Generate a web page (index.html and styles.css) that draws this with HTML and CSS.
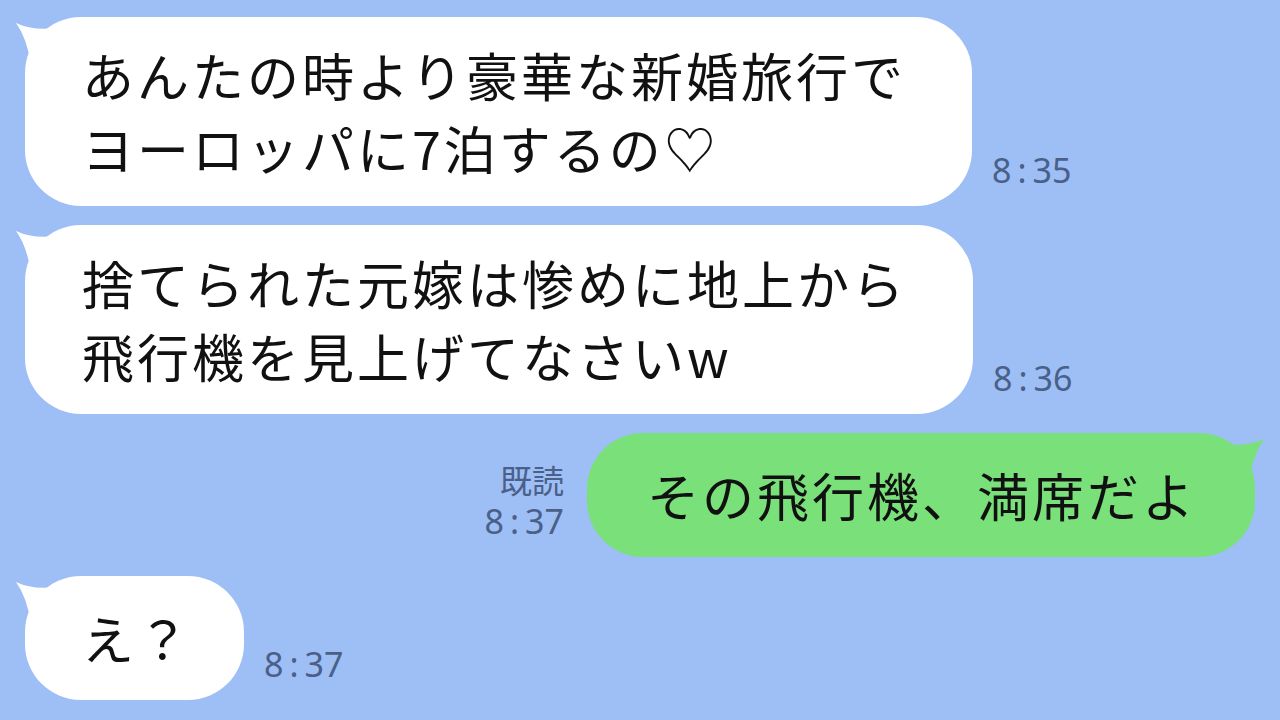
FILE: index.html
```html
<!DOCTYPE html>
<html>
    <head>
        <title>トーク</title>
        <meta charset="utf-8">
        <link rel="stylesheet" href="styles.css">
    </head>
    <body>
        <div class="chat">
            <div class="row">
                <div class="bubble bubble-white">
                    <svg class="tail tail-left" viewBox="0 0 50 50"><path d="M3 6 Q20 14 42 11 L42 48 L18 48 Q14 21 3 6 Z"/></svg>
                    <p>あんたの時より豪華な新婚旅行で<br>ヨーロッパに7泊するの♡</p>
                </div>
                <div class="meta meta-left"><span class="time">8<span class="colon">:</span>35</span></div>
            </div>
            <div class="row">
                <div class="bubble bubble-white">
                    <svg class="tail tail-left" viewBox="0 0 50 50"><path d="M3 6 Q20 14 42 11 L42 48 L18 48 Q14 21 3 6 Z"/></svg>
                    <p>捨てられた元嫁は惨めに地上から<br>飛行機を見上げてなさいw</p>
                </div>
                <div class="meta meta-left"><span class="time">8<span class="colon">:</span>36</span></div>
            </div>
            <div class="row row-right">
                <div class="meta meta-right">
                    <span class="read">既読</span>
                    <span class="time">8<span class="colon">:</span>37</span>
                </div>
                <div class="bubble bubble-green bubble-single">
                    <svg class="tail tail-right" viewBox="0 0 50 50"><path d="M3 6 Q20 14 42 11 L42 48 L18 48 Q14 21 3 6 Z"/></svg>
                    <p>その飛行機、満席だよ</p>
                </div>
            </div>
            <div class="row">
                <div class="bubble bubble-white bubble-single">
                    <svg class="tail tail-left" viewBox="0 0 50 50"><path d="M3 6 Q20 14 42 11 L42 48 L18 48 Q14 21 3 6 Z"/></svg>
                    <p>え？</p>
                </div>
                <div class="meta meta-left"><span class="time">8<span class="colon">:</span>37</span></div>
            </div>
        </div>
    </body>
</html>
```
FILE: styles.css
```css
* {
    margin: 0;
    padding: 0;
}
body {
    background-color: #9ebef6;
    font-family: "Noto Sans CJK JP", "Noto Sans", sans-serif;
    width: 1280px;
    height: 720px;
    overflow: hidden;
}
.chat {
    display: flex;
    flex-direction: column;
    gap: 19px;
    padding: 17px 25px 0 25px;
}
.row {
    display: flex;
    align-items: flex-end;
}
.row-right {
    justify-content: flex-end;
}
.bubble {
    position: relative;
    border-radius: 56px;
    padding: 21px 66px 22px 57px;
}
.bubble-single {
    padding: 25px 52px 26px 57px;
}
.bubble-green.bubble-single {
    padding: 25px 58px 26px 60px;
}
.bubble-white {
    background-color: #fff;
}
.bubble-green {
    background-color: #7ae07a;
}
.bubble p {
    position: relative;
    font-size: 52px;
    line-height: 73px;
    letter-spacing: 3px;
    color: #111;
    white-space: nowrap;
}
.tail {
    position: absolute;
    top: 0;
    width: 50px;
    height: 50px;
}
.tail-left {
    left: -12px;
}
.tail-right {
    right: -12px;
    transform: scaleX(-1);
}
.bubble-white .tail {
    fill: #fff;
}
.bubble-green .tail {
    fill: #7ae07a;
}
.meta {
    display: flex;
    flex-direction: column;
    padding-bottom: 15px;
    color: #4a6088;
}
.meta-left {
    margin-left: 20px;
}
.meta-right {
    align-items: flex-end;
    margin-right: 23px;
}
.time {
    font-family: "Noto Sans", sans-serif;
    font-size: 34px;
    line-height: 42px;
}
.colon {
    margin: 0 6px;
}
.read {
    font-size: 32px;
    line-height: 42px;
}
```
